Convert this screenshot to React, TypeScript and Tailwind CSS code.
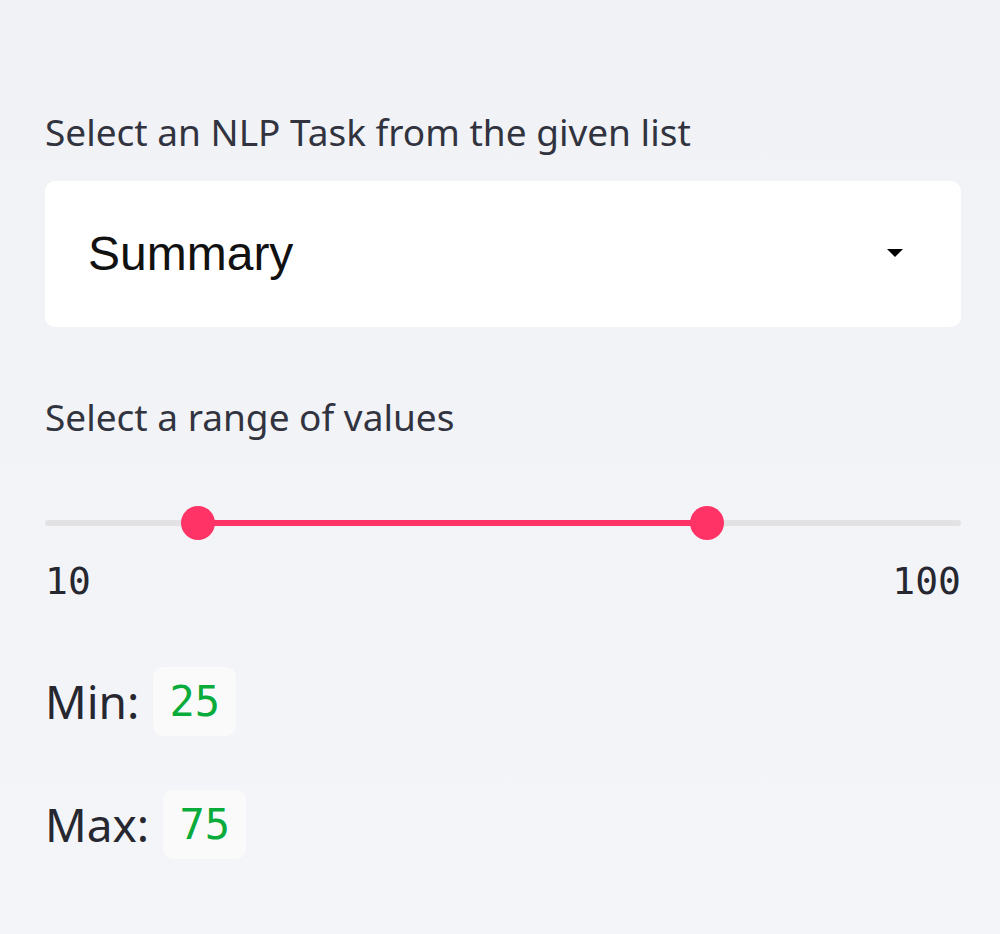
import React from "react";

const sans = "font-['Noto_Sans',_'Open_Sans',_sans-serif]";
const mono = "font-['DejaVu_Sans_Mono',_'Liberation_Mono',_monospace]";

const RangeSlider = ({ min, max, low, high }: { min: number; max: number; low: number; high: number }) => {
  const lowPct = ((low - min) / (max - min)) * 100;
  const highPct = ((high - min) / (max - min)) * 100;

  return (
    <div className="flex flex-col">
      <div className="relative h-[36px] flex items-center">
        <div className="h-[6px] w-full bg-[#e2e2e4] rounded-full" />
        <div
          className="absolute h-[6px] bg-[#ff3366]"
          style={{ left: `${lowPct}%`, width: `${highPct - lowPct}%` }}
        />
        <div
          className="absolute w-[34px] h-[34px] -ml-[17px] rounded-full bg-[#ff3366]"
          style={{ left: `${lowPct}%` }}
        />
        <div
          className="absolute w-[34px] h-[34px] -ml-[17px] rounded-full bg-[#ff3366]"
          style={{ left: `${highPct}%` }}
        />
      </div>
      <div className={`flex justify-between mt-[20px] text-[38px] leading-[40px] text-[#262730] ${mono}`}>
        <span>{min}</span>
        <span>{max}</span>
      </div>
    </div>
  );
};

const ValueRow = ({ label, value }: { label: string; value: number }) => (
  <div className="flex items-center gap-[14px]">
    <span className={`text-[46px] text-[#262730] ${sans}`}>{label}</span>
    <span
      className={`bg-[#fafafa] rounded-[10px] h-[69px] w-[83px] flex items-center justify-center text-[42px] text-[#09ab3b] ${mono}`}
    >
      {value}
    </span>
  </div>
);

export default function App() {
  return (
    <div className={`min-h-[934px] w-[1000px] bg-gradient-to-b from-[#f0f2f6] to-[#f4f5f8] pl-[45px] pr-[39px] pt-[108px] ${sans}`}>
      <p className="text-[37px] leading-[48px] text-[#31333f]">Select an NLP Task from the given list</p>

      <div className="mt-[25px] h-[146px] bg-white rounded-[10px] flex items-center justify-between pl-[43px] pr-[58px]">
        <span className="text-[48px] text-[#111] font-['Liberation_Sans',_sans-serif]">Summary</span>
        <svg width="16" height="10" viewBox="0 0 16 10">
          <path d="M0 0 H16 L8 8 Z" fill="#000" />
        </svg>
      </div>

      <p className="mt-[66px] text-[37px] leading-[48px] text-[#31333f]">Select a range of values</p>

      <div className="mt-[64px]">
        <RangeSlider min={10} max={100} low={25} high={75} />
      </div>

      <div className="mt-[66px] flex flex-col gap-[54px]">
        <ValueRow label="Min:" value={25} />
        <ValueRow label="Max:" value={75} />
      </div>
    </div>
  );
}
